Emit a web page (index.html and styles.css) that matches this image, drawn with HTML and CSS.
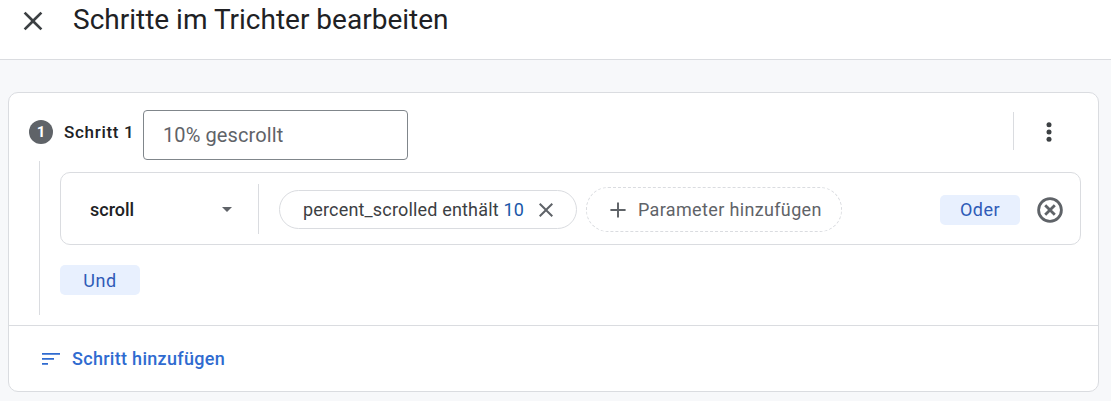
FILE: index.html
```html
<!DOCTYPE html>
<html lang="de">
<head>
  <meta charset="UTF-8">
  <title>Schritte im Trichter bearbeiten</title>
  <link rel="stylesheet" href="styles.css">
</head>
<body>
  <header class="topbar">
    <svg class="close-icon" width="32" height="32" viewBox="0 0 24 24"><path d="M19 6.41 17.59 5 12 10.59 6.41 5 5 6.41 10.59 12 5 17.59 6.41 19 12 13.41 17.59 19 19 17.59 13.41 12z"/></svg>
    <h1>Schritte im Trichter bearbeiten</h1>
  </header>
  <main class="content">
    <section class="card">
      <div class="card-body">
        <div class="step-head">
          <span class="step-badge">1</span>
          <span class="step-label">Schritt 1</span>
          <div class="step-name">10% gescrollt</div>
          <div class="step-menu">
            <svg width="24" height="24" viewBox="0 0 24 24"><circle cx="12" cy="4.7" r="2.5"/><circle cx="12" cy="12" r="2.5"/><circle cx="12" cy="19.3" r="2.5"/></svg>
          </div>
        </div>
        <div class="step-body">
          <div class="event-box">
            <div class="event-select">
              <span>scroll</span>
              <span class="caret"></span>
            </div>
            <div class="chip">
              <span>percent_scrolled enthält <b class="chip-value">10</b></span>
              <svg width="24" height="24" viewBox="0 0 24 24"><path d="M19 6.41 17.59 5 12 10.59 6.41 5 5 6.41 10.59 12 5 17.59 6.41 19 12 13.41 17.59 19 19 17.59 13.41 12z"/></svg>
            </div>
            <div class="chip-add">
              <svg width="26" height="26" viewBox="0 0 24 24"><path d="M19 12.9h-6.1V19h-1.8v-6.1H5v-1.8h6.1V5h1.8v6.1H19z"/></svg>
              <span>Parameter hinzufügen</span>
            </div>
            <button class="soft-btn btn-or">Oder</button>
            <svg class="remove-icon" width="28" height="28" viewBox="0 0 28 28"><circle cx="14" cy="14" r="11.4"/><path d="M9.2 9.2l9.6 9.6M18.8 9.2l-9.6 9.6"/></svg>
          </div>
          <button class="soft-btn">Und</button>
        </div>
      </div>
      <footer class="card-foot">
        <svg width="18" height="14" viewBox="0 0 18 14"><path d="M0 1h18v1.8H0zM0 6h12v1.8H0zM0 11h6v1.8H0z"/></svg>
        <span>Schritt hinzufügen</span>
      </footer>
    </section>
  </main>
</body>
</html>
```

FILE: styles.css
```css
html, body {
  margin: 0;
  height: 100%;
}
body {
  font-family: Roboto, Arial, sans-serif;
  background: #f7f8fa;
  color: #202124;
  overflow: hidden;
}
.topbar {
  height: 59px;
  background: #fff;
  border-bottom: 1px solid #dadce0;
  display: flex;
  align-items: flex-start;
  padding-left: 17px;
}
.close-icon {
  margin-top: 5px;
  fill: #3c4043;
}
.topbar h1 {
  margin: 0 0 0 24px;
  font-size: 28px;
  font-weight: 400;
  line-height: 40px;
}
.content {
  padding: 32px 12px 0 8px;
}
.card {
  height: 298px;
  background: #fff;
  border: 1px solid #dadce0;
  border-radius: 10px;
  display: flex;
  flex-direction: column;
}
.card-body {
  height: 215px;
  border-bottom: 1px solid #dadce0;
  padding: 17px 17px 0 20px;
}
.step-head {
  display: flex;
  align-items: flex-start;
}
.step-badge {
  width: 24px;
  height: 24px;
  margin-top: 10px;
  border-radius: 50%;
  background: #5f6368;
  color: #fff;
  font-size: 15px;
  font-weight: 700;
  line-height: 24px;
  text-align: center;
}
.step-label {
  margin: 12px 0 0 11px;
  width: 79px;
  font-size: 17px;
  font-weight: 500;
  line-height: 20px;
  letter-spacing: 0.7px;
}
.step-name {
  width: 244px;
  height: 48px;
  border: 1px solid #80868b;
  border-radius: 4px;
  padding-left: 19px;
  font-size: 20px;
  letter-spacing: 0.1px;
  line-height: 49px;
  color: #5f6368;
}
.step-menu {
  margin: 2px 0 0 605px;
  height: 38px;
  border-left: 1px solid #dadce0;
  padding: 8px 0 0 23px;
  box-sizing: border-box;
  fill: #3c4043;
}
.step-body {
  margin: 1px 0 0 10px;
  height: 143px;
  border-left: 1px solid #dadce0;
  padding: 11px 0 0 20px;
}
.event-box {
  height: 69px;
  padding-top: 2px;
  border: 1px solid #dadce0;
  border-radius: 10px;
  display: flex;
  align-items: center;
  margin-bottom: 20px;
}
.event-select {
  width: 168px;
  height: 48px;
  margin-top: -2px;
  padding: 2px 0 0 29px;
  border-right: 1px solid #dadce0;
  display: flex;
  align-items: center;
  font-size: 18px;
  font-weight: 500;
}
.caret {
  margin-left: 88px;
  border-left: 5px solid transparent;
  border-right: 5px solid transparent;
  border-top: 5px solid #5f6368;
}
.chip {
  margin-left: 20px;
  width: 296px;
  height: 37px;
  border: 1px solid #dadce0;
  border-radius: 20px;
  display: flex;
  align-items: center;
  font-size: 18px;
  fill: #5f6368;
  color: #3c4043;
}
.chip > span {
  margin: 0 10px 0 23px;
  font-weight: 400;
  letter-spacing: 0.17px;
  white-space: nowrap;
}
.chip-value {
  color: #1a56a8;
  font-weight: 400;
}
.chip-add {
  margin-left: 9px;
  width: 256px;
  height: 45px;
  border: 1px dashed #dadce0;
  border-radius: 22px;
  display: flex;
  align-items: center;
  padding-left: 18px;
  box-sizing: border-box;
  font-size: 18px;
  color: #5f6368;
  fill: #5f6368;
}
.chip-add span {
  margin-left: 7px;
  letter-spacing: 0.35px;
}
.soft-btn {
  width: 80px;
  height: 30px;
  border: 0;
  padding: 0;
  border-radius: 5px;
  background: #e8f0fe;
  color: #2f5bb7;
  font-family: inherit;
  font-size: 18px;
  letter-spacing: 0.5px;
}
.btn-or {
  margin-left: 98px;
}
.remove-icon {
  margin-left: 16px;
  fill: none;
  stroke: #5f6368;
  stroke-width: 2.8;
}
.card-foot {
  flex: 1;
  display: flex;
  align-items: center;
  padding-left: 33px;
  color: #2f6bd0;
  fill: #2f6bd0;
  font-size: 18px;
  font-weight: 500;
}
.card-foot span {
  margin-left: 12px;
  letter-spacing: 0.3px;
}
```
